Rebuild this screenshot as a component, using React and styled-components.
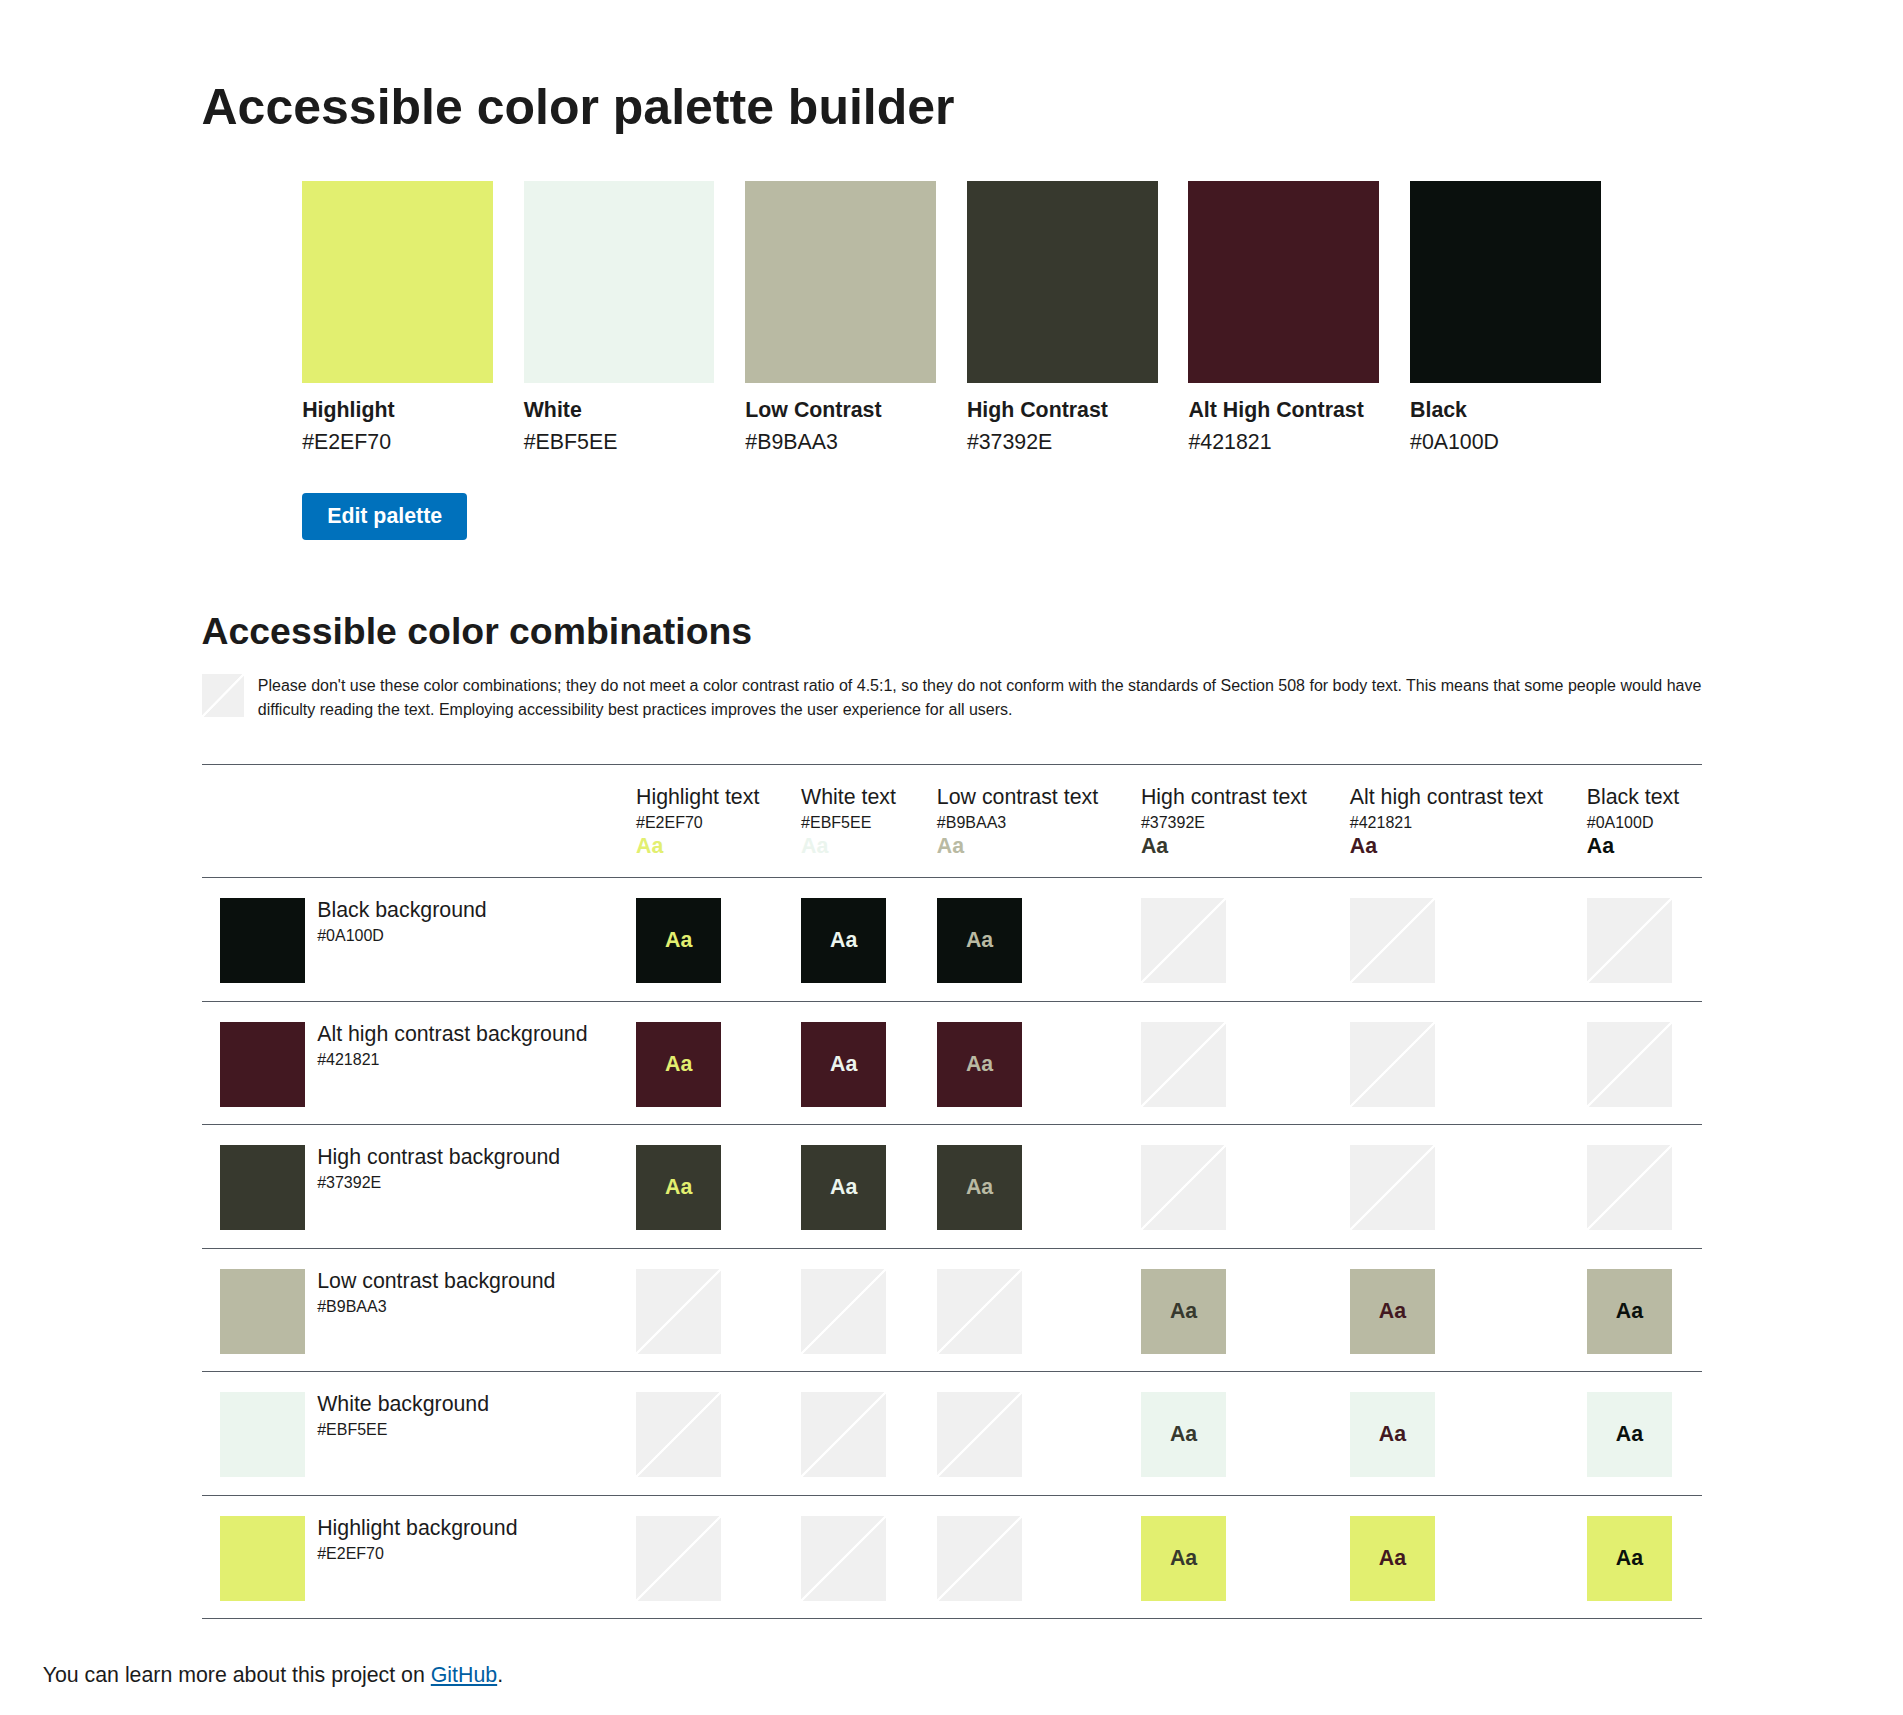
import React from "react";
import styled, { createGlobalStyle } from "styled-components";

const GlobalStyle = createGlobalStyle`
  html, body {
    margin: 0;
    padding: 0;
    background: #fff;
  }
  body {
    font-family: "Liberation Sans", Arial, sans-serif;
    color: #1b1b1b;
  }
`;

const palette = [
  { name: "Highlight", text: "Highlight", hex: "#E2EF70", light: true },
  { name: "White", text: "White", hex: "#EBF5EE", light: true },
  { name: "Low Contrast", text: "Low contrast", hex: "#B9BAA3", light: true },
  { name: "High Contrast", text: "High contrast", hex: "#37392E", light: false },
  { name: "Alt High Contrast", text: "Alt high contrast", hex: "#421821", light: false },
  { name: "Black", text: "Black", hex: "#0A100D", light: false },
];

// backgrounds are listed darkest first
const backgrounds = [...palette].reverse();

export default function App() {
  return (
    <>
      <GlobalStyle />
      <Styled.Main>
        <Styled.Title>Accessible color palette builder</Styled.Title>
        <Styled.PaletteWrap>
          <Styled.Swatches>
            {palette.map((c) => (
              <Styled.SwatchItem key={c.hex}>
                <Styled.Swatch $color={c.hex} />
                <Styled.SwatchName>{c.name}</Styled.SwatchName>
                <Styled.SwatchHex>{c.hex}</Styled.SwatchHex>
              </Styled.SwatchItem>
            ))}
          </Styled.Swatches>
          <Styled.Button type="button">Edit palette</Styled.Button>
        </Styled.PaletteWrap>

        <Styled.Subtitle>Accessible color combinations</Styled.Subtitle>
        <Styled.Note>
          <Styled.NoteIcon />
          <Styled.NoteText>
            Please don't use these color combinations; they do not meet a color
            contrast ratio of 4.5:1, so they do not conform with the standards
            of Section 508 for body text. This means that some people would have
            difficulty reading the text. Employing accessibility best practices
            improves the user experience for all users.
          </Styled.NoteText>
        </Styled.Note>

        <Styled.Table>
          <thead>
            <tr>
              <Styled.Th />
              {palette.map((c) => (
                <Styled.Th key={c.hex}>
                  <Styled.ColName>{c.text} text</Styled.ColName>
                  <Styled.ColHex>{c.hex}</Styled.ColHex>
                  <Styled.ColSample $color={c.hex}>Aa</Styled.ColSample>
                </Styled.Th>
              ))}
            </tr>
          </thead>
          <tbody>
            {backgrounds.map((bg) => (
              <Styled.Row key={bg.hex}>
                <Styled.Td>
                  <Styled.RowLabel>
                    <Styled.Chip $color={bg.hex} />
                    <div>
                      <Styled.RowName>{bg.text} background</Styled.RowName>
                      <Styled.RowHex>{bg.hex}</Styled.RowHex>
                    </div>
                  </Styled.RowLabel>
                </Styled.Td>
                {palette.map((fg) =>
                  fg.light !== bg.light ? (
                    <Styled.Td key={fg.hex}>
                      <Styled.Combo $bg={bg.hex} $fg={fg.hex}>
                        Aa
                      </Styled.Combo>
                    </Styled.Td>
                  ) : (
                    <Styled.Td key={fg.hex}>
                      <Styled.Blocked />
                    </Styled.Td>
                  )
                )}
              </Styled.Row>
            ))}
          </tbody>
        </Styled.Table>
      </Styled.Main>
      <Styled.Footer>
        You can learn more about this project on{" "}
        <Styled.Link href="#">GitHub</Styled.Link>.
      </Styled.Footer>
    </>
  );
}

const stripe = `
  background: linear-gradient(
    to bottom right,
    #f0f0f0 calc(50% - 1.5px),
    #ffffff calc(50% - 0.8px),
    #ffffff calc(50% + 0.8px),
    #f0f0f0 calc(50% + 1.5px)
  );
`;

const Styled = {
  Main: styled.main`
    max-width: 1500px;
    margin: 0 auto;
  `,
  Title: styled.h1`
    margin: 77px 0 44px;
    font-size: 50px;
    line-height: 60px;
    font-weight: 700;
  `,
  PaletteWrap: styled.div`
    width: 1298.7px;
    margin: 0 auto;
  `,
  Swatches: styled.div`
    display: grid;
    grid-template-columns: repeat(6, 190.7px);
    column-gap: 30.9px;
  `,
  SwatchItem: styled.div`
    display: flex;
    flex-direction: column;
  `,
  Swatch: styled.div`
    height: 201.7px;
    background: ${(p) => p.$color};
    margin-bottom: 12.6px;
  `,
  SwatchName: styled.div`
    font-size: 21.33px;
    line-height: 31.5px;
    font-weight: 700;
  `,
  SwatchHex: styled.div`
    font-size: 21.33px;
    line-height: 31.5px;
  `,
  Button: styled.button`
    margin-top: 34.6px;
    height: 46.7px;
    padding: 0 25px;
    border: 0;
    border-radius: 4px;
    background: #0071bc;
    color: #fff;
    font-family: "Liberation Sans", Arial, sans-serif;
    font-size: 21.33px;
    font-weight: 700;
    line-height: 46.7px;
    cursor: pointer;
  `,
  Subtitle: styled.h2`
    margin: 69.4px 0 21px;
    font-size: 37.4px;
    line-height: 44px;
    font-weight: 700;
  `,
  Note: styled.div`
    display: flex;
    align-items: flex-start;
    gap: 13.6px;
    margin-bottom: 42.3px;
  `,
  NoteIcon: styled.div`
    flex: 0 0 42.7px;
    height: 42.7px;
    margin-top: 0.5px;
    ${stripe}
  `,
  NoteText: styled.p`
    margin: 0;
    font-size: 16px;
    line-height: 24px;
  `,
  Table: styled.table`
    width: 100%;
    border-collapse: collapse;
    border-top: 1px solid #565c65;
  `,
  Th: styled.th`
    padding: 21px 18.67px 20px;
    text-align: left;
    vertical-align: top;
    font-weight: 400;
    border-bottom: 1px solid #565c65;
  `,
  ColName: styled.div`
    font-size: 21.33px;
    line-height: 22px;
    white-space: nowrap;
  `,
  ColHex: styled.div`
    margin-top: 2.8px;
    font-size: 16px;
    line-height: 24px;
  `,
  ColSample: styled.div`
    margin-top: 1.2px;
    font-size: 21.33px;
    line-height: 21px;
    font-weight: 700;
    color: ${(p) => p.$color};
  `,
  Row: styled.tr`
    border-bottom: 1px solid #565c65;
  `,
  Td: styled.td`
    padding: 19.8px 18.67px 17.4px;
    vertical-align: top;
  `,
  RowLabel: styled.div`
    display: flex;
    align-items: flex-start;
    gap: 11.7px;
    white-space: nowrap;
  `,
  Chip: styled.div`
    flex: 0 0 85.33px;
    height: 85.33px;
    background: ${(p) => p.$color};
  `,
  RowName: styled.div`
    font-size: 21.33px;
    line-height: 24.5px;
  `,
  RowHex: styled.div`
    margin-top: 1.8px;
    font-size: 16px;
    line-height: 24px;
  `,
  Combo: styled.div`
    width: 85.33px;
    height: 85.33px;
    display: flex;
    align-items: center;
    justify-content: center;
    background: ${(p) => p.$bg};
    color: ${(p) => p.$fg};
    font-size: 21.33px;
    font-weight: 700;
  `,
  Blocked: styled.div`
    width: 85.33px;
    height: 85.33px;
    ${stripe}
  `,
  Footer: styled.p`
    margin: 40px 0 0;
    padding: 0 42.67px 16px;
    font-size: 21.33px;
    line-height: 32px;
  `,
  Link: styled.a`
    color: #005ea2;
    text-decoration: underline;
  `,
};
